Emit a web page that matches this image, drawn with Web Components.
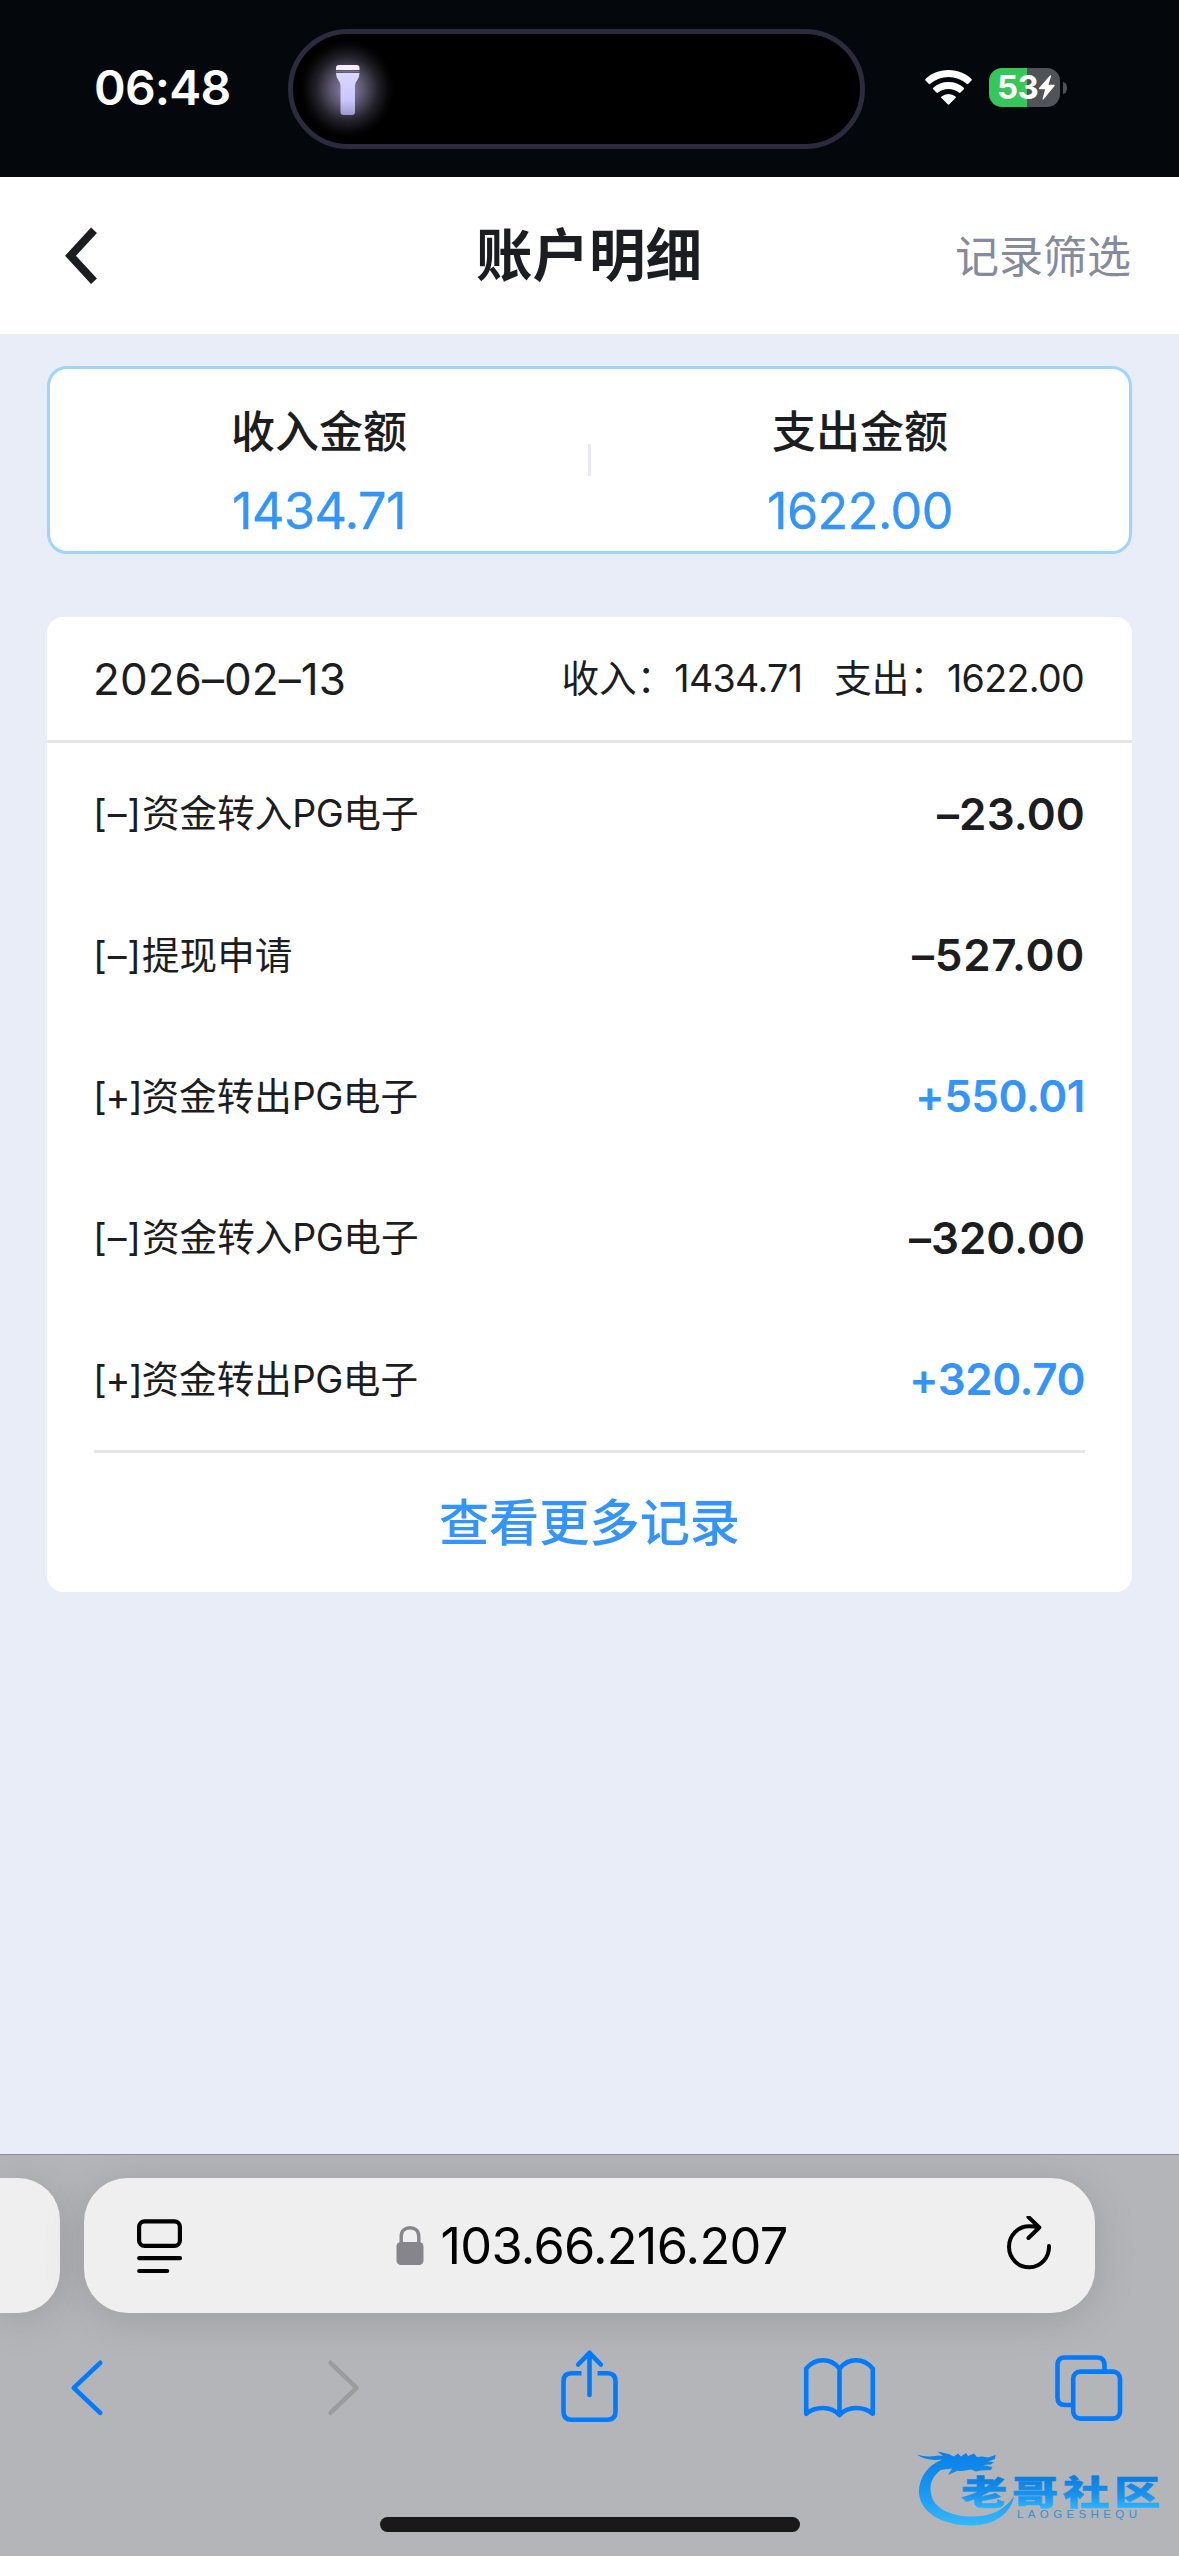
<!DOCTYPE html>
<html lang="zh-CN">
<head>
<meta charset="utf-8">
<title>账户明细</title>
<style>
html,body{margin:0;padding:0}
body{width:1179px;height:2556px;overflow:hidden;background:#e9edf8;color:#1b1d21;font-family:Inter,"Noto Sans CJK SC",sans-serif;font-feature-settings:"calt" 0}
</style>
</head>
<body>
<app-screen></app-screen>
<script>
const define = (name, html, after) => customElements.define(name, class extends HTMLElement {
  connectedCallback() {
    if (this.shadowRoot) return;
    const t = document.createElement('template');
    t.innerHTML = html;
    this.attachShadow({ mode: 'open' }).append(t.content.cloneNode(true));
    if (after) after(this);
  }
});

/* Text run tracked to an exact advance width (attribute w, in px). */
define('fit-text', `
<style>:host{display:inline-block;white-space:nowrap}span{display:inline-block}</style>
<span><slot></slot></span>`, el => {
  const span = el.shadowRoot.querySelector('span');
  const w = parseFloat(el.getAttribute('w'));
  const n = [...el.textContent].length;
  const ls = (w - span.getBoundingClientRect().width) / n;
  span.style.letterSpacing = ls + 'px';
});

define('status-bar', `
<style>
:host{display:flex;box-sizing:border-box;height:177px;background:#04070c;padding:29px 0 28px 94px;color:#fff}
.time{width:194px;font-weight:600;font-size:48px;line-height:118px;height:118px}
.island{box-sizing:border-box;width:577px;height:120px;border:5px solid #2b2b3d;border-radius:60px;background:radial-gradient(ellipse 47px 49px at 54px 55px,rgba(170,160,205,.85) 0,rgba(135,128,162,.68) 35%,rgba(75,72,90,.45) 66%,rgba(25,24,30,.3) 88%,transparent 100%),#000}
.island svg{display:block;margin:30px 0 0 42px}
.wifi{display:block;margin:40px 0 0 59px}
.bat{display:flex;margin:39px 0 0 16px;width:71px;height:39px;border-radius:13px;background:linear-gradient(90deg,#35c759 38px,#505357 38px);align-items:center;font-weight:700;font-size:33px;line-height:39px}
.bat fit-text{margin-left:8px}
.nub{width:4px;height:12px;margin:53px 0 0 3px;background:#505357;border-radius:0 4px 4px 0/0 6px 6px 0}
</style>
<div class="time"><fit-text w="136.5">06:48</fit-text></div>
<div class="island"><svg width="26" height="52" viewBox="335 63 26 52"><defs><linearGradient id="g" x2="0" y2="1"><stop offset="0" stop-color="#dcd6ff"/><stop offset=".65" stop-color="#c9c6fb"/><stop offset="1" stop-color="#9d9acb"/></linearGradient></defs><path fill="#f8ecff" d="M336 69v-2q0-3 3-3h17.500q3 0 3 3v2z"/><path d="M336 70.500h23.500" stroke="#77718d" stroke-width="1.500"/><path fill="url(#g)" d="M336 72h23.500q0 4.500-2.500 7.500-2 2.500-2 5v26.500q0 3-3 3h-8.500q-3 0-3-3V84.500q0-2.500-2-5Q336 76.500 336 72z"/></svg></div>
<svg class="wifi" width="49" height="36" viewBox="0 0 49 36"><g fill="#fff"><path d="M24.500 1C34 1 42 4.700 47.500 10q.8.800 0 1.600l-3.200 3.200q-.8.800-1.600 0Q34.500 8 24.500 8T6.300 14.800q-.8.800-1.600 0l-3.200-3.200q-.8-.8 0-1.600C7 4.700 15 1 24.500 1z"/><path d="M24.500 13q9 0 15.300 5.700.8.800 0 1.600l-3.300 3.300q-.8.700-1.600 0Q30.500 20 24.500 20t-10.400 3.600q-.8.700-1.600 0l-3.300-3.300q-.8-.8 0-1.600Q15.500 13 24.500 13z"/><path d="M24.500 25q4 0 7 2.500.8.800 0 1.600l-6.200 6.200q-.8.800-1.600 0l-6.200-6.200q-.8-.8 0-1.600 3-2.500 7-2.500z"/></g></svg>
<div class="bat"><fit-text w="41">53</fit-text><svg width="18" height="25" viewBox="0 0 18 25"><path fill="#fff" d="M12.600.300Q13.400.500 13 1.400L10.400 9.700H16q1.300.200.500 1.400L5.600 24.200Q4.300 25 4.600 23.500L7.200 14.300H1.600Q.400 14 1 13L12 .600q.3-.3.600-.3z"/></svg></div>
<div class="nub"></div>`);

define('nav-header', `
<style>
:host{display:flex;box-sizing:border-box;height:157px;background:#fff;align-items:center;padding:0 48px 0 60px}
.side{flex:1;display:flex}
.end{justify-content:flex-end}
h1{margin:0 13px 0 0;font-size:56.500px;font-weight:600;line-height:80px;white-space:nowrap}
.filter{font-size:44px;line-height:60px;color:#858b9c;padding-top:2px}
</style>
<div class="side"><svg width="44" height="66" viewBox="60 222.700 44 66"><path d="M94 230 70.500 255.500 94 281" fill="none" stroke="#1b1d21" stroke-width="8"/></svg></div>
<h1><slot name="title"></slot></h1>
<div class="side end"><span class="filter"><slot name="action"></slot></span></div>`);

define('summary-cell', `
<style>
:host{flex:1;display:flex;flex-direction:column;align-items:center}
.t{font-size:44px;line-height:60px;font-weight:500;margin-top:33px}
.n{font-size:50.500px;line-height:60px;font-weight:400;color:#3394fb;-webkit-text-stroke:.3px #3394fb;margin-top:19px}
</style>
<div class="t"><slot name="label"></slot></div><div class="n"><slot></slot></div>`);

define('summary-card', `
<style>
:host{display:flex;box-sizing:border-box;height:188px;margin:32px 47px 0;border:3px solid #9fd4ff;border-radius:20px;background:#fff}
i{width:3px;height:32px;margin-top:75px;background:#e9e8f5}
</style>
<slot name="in"></slot><i></i><slot name="out"></slot>`);

define('record-row', `
<style>
:host{display:flex;justify-content:space-between;align-items:center;height:141.400px;padding:0 47px 0 46px;font-size:37.600px;line-height:60px}
.l{padding-top:1px}
.a{font-size:44px;font-weight:600}
:host([plus]) .a{color:#3394fb}
</style>
<span class="l"><slot></slot></span><span class="a"><slot name="amount"></slot></span>`);

define('record-card', `
<style>
:host{display:block;margin:63px 47px 0;height:975px;border-radius:16px;background:#fff;overflow:hidden}
header{display:flex;justify-content:space-between;align-items:center;box-sizing:border-box;height:126px;padding:0 48px 0 46px;border-bottom:3px solid #e6e6e6;font-size:37.600px;line-height:60px}
.d{font-size:44px}
.s{display:flex}
footer{margin:0 47px;border-top:3px solid #e6e6e6;text-align:center;font-size:50.200px;line-height:139px;font-weight:500;color:#3394fb}
</style>
<header><span class="d"><slot name="date"></slot></span><div class="s"><slot name="totals"></slot></div></header>
<slot></slot>
<footer><slot name="more"></slot></footer>`);

define('address-bar', `
<style>
:host{display:flex;gap:24px;height:135px;padding-top:23px}
.prev{width:60px;border-radius:0 42px 42px 0}
.prev,.bar{background:#efefef;box-shadow:0 6px 44px rgba(0,0,0,.13)}
.bar{box-sizing:border-box;width:1011px;border-radius:44px;display:flex;align-items:center;justify-content:space-between;padding:0 41px 0 51px}
.url{display:flex;align-items:center;font-size:50.500px;line-height:80px;color:#000;gap:17px;margin-right:6px}
svg{display:block}
.url fit-text{padding-top:1px}
</style>
<div class="prev"></div>
<div class="bar">
<svg width="50" height="58" viewBox="135 2217 50 58"><g fill="none" stroke="#000" stroke-width="4.200" stroke-linecap="round"><rect x="139.100" y="2221.400" width="40.800" height="24.500" rx="5.500"/><path d="M139.200 2258.200h40.800M139.200 2271h28"/></g></svg>
<div class="url"><svg width="28" height="40" viewBox="395.500 2225 28 40"><rect x="396" y="2241" width="27" height="23" rx="4.500" fill="#86858b"/><path d="M400.700 2243v-7.500c0-5.500 3.700-8.700 8.800-8.700s8.800 3.200 8.800 8.700v7.500" fill="none" stroke="#86858b" stroke-width="3.400"/></svg><fit-text w="347">103.66.216.207</fit-text></div>
<svg width="50" height="60" viewBox="1004 2217.500 50 60"><path d="M1028.500 2218.500 1039.300 2229 1028.500 2239.500M1049 2247.500A20 20.500 0 1 1 1029 2227.800Q1034.500 2227.800 1039 2229" fill="none" stroke="#000" stroke-width="4" stroke-linecap="round" stroke-linejoin="round"/></svg>
</div>`);

define('tool-row', `
<style>
:host{display:flex;height:80px;margin-top:34px;padding:0 54px 0 67px}
svg{display:block;flex:none;fill:none;stroke:#007aff;stroke-width:4.600;stroke-linecap:round;stroke-linejoin:round}
</style>
<svg width="40" height="80" viewBox="67 2347 40 80"><path d="M100.200 2362.800 73.800 2387.800 100.200 2412.800"/></svg>
<svg width="40" height="80" viewBox="323 2347 40 80" style="margin-left:216px;stroke:#9b9c9d"><path d="M330.500 2362.800 356.500 2387.800 330.500 2412.800"/></svg>
<svg width="66" height="80" viewBox="556 2347 66 80" style="margin-left:193px"><path d="M589.500 2353.500V2395M578.200 2364.500 589.500 2352.800 600.800 2364.500"/><path stroke-linecap="butt" d="M581.500 2373.200H571.500q-8 0-8 8V2411.800q0 8 8 8H607.500q8 0 8-8V2381.200q0-8-8-8H597.500"/></svg>
<svg width="78" height="80" viewBox="801 2347 78 80" style="margin-left:179px"><path d="M806.200 2413.800V2368.600Q813 2360.200 823 2360.200T839.500 2368.600Q846 2360.200 856 2360.200T872.800 2368.600V2413.800Q866 2408 856 2408T839.500 2415Q833 2408 823 2408T806.200 2413.800ZM839.500 2368.600V2415"/></svg>
<svg width="74" height="80" viewBox="1051 2347 74 80" style="margin-left:172px"><rect x="1073.200" y="2371.600" width="46.800" height="47" rx="7"/><path stroke-linecap="butt" d="M1104.500 2370V2365q0-7.500-7.500-7.500H1065q-7.500 0-7.500 7.500V2397.500q0 7.500 7.500 7.500H1071"/></svg>`);

/* Community badge: dragon ring with a stretched wordmark. */
define('site-badge', `
<style>:host{position:absolute;left:910px;top:2440px;width:260px;height:96px}svg{display:block}text{font-family:"Noto Sans CJK SC",sans-serif}</style>
<svg width="260" height="96" viewBox="910 2440 260 96">
<defs><linearGradient id="r" gradientUnits="userSpaceOnUse" x1="0" y1="2452" x2="0" y2="2525"><stop offset="0" stop-color="#0b80e4"/><stop offset=".5" stop-color="#1594f5"/><stop offset="1" stop-color="#35b7fb"/></linearGradient>
<linearGradient id="t" gradientUnits="userSpaceOnUse" x1="0" y1="-28" x2="0" y2="4"><stop offset="0" stop-color="#087ee0"/><stop offset=".6" stop-color="#1893ee"/><stop offset="1" stop-color="#2cb6ff"/></linearGradient></defs>
<path fill="url(#r)" d="M950 2457C930 2462 919 2475 919 2493C920 2512 942 2525.500 971 2525.500C994 2525.500 1011 2514 1014 2496C1004 2511 990 2516.500 972 2516.500C947 2516.500 930.500 2506 930.500 2489C930.500 2477 940 2467 956 2464Z"/>
<path fill="url(#r)" d="M917 2454.500Q927 2458 938 2455.500L943 2456 937.500 2451.500Q947 2453 954 2456.500L958 2453.500 961 2456.500 966 2453 968 2456 974 2453.500 977 2457 982 2456.500 988 2457.500 995.500 2455 995 2459 988 2461.500 994 2462 991 2464.500 983 2465 992.500 2467 991 2470 981 2470.500 976 2471.500 971 2469.500 962 2471 957 2471 948 2475 952 2468.500 940 2470 947 2462 938 2463 942 2459.500Q926 2461.500 917 2454.500Z"/>
<text transform="translate(961 2504.500) scale(1.360 1)" font-size="34" font-weight="900" textLength="146.500" lengthAdjust="spacing" fill="url(#t)" stroke="url(#t)" stroke-width=".5">老哥社区</text>
<text x="1017" y="2518" font-size="11.500" textLength="120" lengthAdjust="spacing" fill="#2f92da" style="font-family:'Liberation Sans',sans-serif">LAOGESHEQU</text>
</svg>`);

define('browser-bar', `
<style>
:host{display:block;box-sizing:border-box;height:402px;border-top:1px solid #8e8e93;background:#b4b5b8;overflow:hidden}
.home{width:420px;height:15px;border-radius:8px;background:#191919;margin:90px auto 0}
</style>
<address-bar></address-bar><tool-row></tool-row><div class="home"></div><site-badge></site-badge>`);

define('app-screen', `
<style>
:host{display:flex;flex-direction:column;width:1179px;height:2556px}
main{flex:1}
.g{margin-left:32px}
</style>
<status-bar></status-bar>
<nav-header><span slot="title">账户明细</span><span slot="action">记录筛选</span></nav-header>
<main>
<summary-card>
<summary-cell slot="in"><span slot="label">收入金额</span><fit-text w="174">1434.71</fit-text></summary-cell>
<summary-cell slot="out"><span slot="label">支出金额</span><fit-text w="186">1622.00</fit-text></summary-cell>
</summary-card>
<record-card>
<fit-text slot="date" w="253">2026–02–13</fit-text>
<span slot="totals">收入：<fit-text w="128">1434.71</fit-text></span>
<span slot="totals" class="g">支出：<fit-text w="137">1622.00</fit-text></span>
<record-row><fit-text w="49">[–]</fit-text>资金转入<fit-text w="51">PG</fit-text>电子<fit-text slot="amount" w="148">–23.00</fit-text></record-row>
<record-row><fit-text w="49">[–]</fit-text>提现申请<fit-text slot="amount" w="173">–527.00</fit-text></record-row>
<record-row plus><fit-text w="48.5">[+]</fit-text>资金转出<fit-text w="51">PG</fit-text>电子<fit-text slot="amount" w="170">+550.01</fit-text></record-row>
<record-row><fit-text w="49">[–]</fit-text>资金转入<fit-text w="51">PG</fit-text>电子<fit-text slot="amount" w="176">–320.00</fit-text></record-row>
<record-row plus><fit-text w="48.5">[+]</fit-text>资金转出<fit-text w="51">PG</fit-text>电子<fit-text slot="amount" w="176">+320.70</fit-text></record-row>
<span slot="more">查看更多记录</span>
</record-card>
</main>
<browser-bar></browser-bar>`);
</script>
</body>
</html>
